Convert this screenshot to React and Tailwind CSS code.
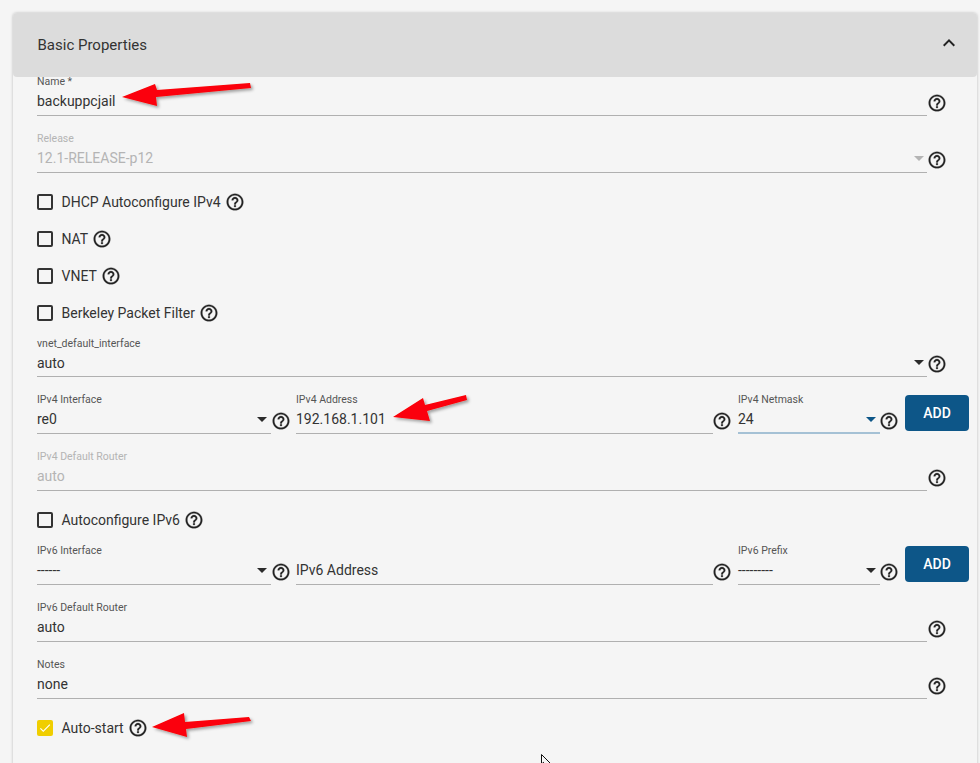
import React from "react";
import { MdExpandLess, MdCheck } from "react-icons/md";

const HelpGlyph = () => (
  <svg width="20" height="20" viewBox="0 0 24 24" fill="currentColor" stroke="currentColor" strokeWidth="0.3">
    <path d="M11 18h2v-2h-2v2zm1-16C6.48 2 2 6.48 2 12s4.48 10 10 10 10-4.48 10-10S17.52 2 12 2zm0 18c-4.41 0-8-3.59-8-8s3.59-8 8-8 8 3.59 8 8-3.59 8-8 8zm0-14c-2.21 0-4 1.79-4 4h2c0-1.1.9-2 2-2s2 .9 2 2c0 2-3 1.75-3 5h2c0-2.25 3-2.5 3-5 0-2.21-1.79-4-4-4z" />
  </svg>
);

const Help = ({ className = "" }) => (
  <div className={"w-[20px] h-[20px] shrink-0 mt-[16px] text-[#222222] " + className}>
    <HelpGlyph />
  </div>
);

const Caret = ({ color = "#2b2b2b", right = "right-[4px]" }) => (
  <svg width="10" height="5" viewBox="0 0 10 5" className={"absolute top-[22px] " + right}>
    <path d="M0 0h10L5 5z" fill={color} />
  </svg>
);

const Field = ({ label, value, disabled, select, focused, tight, className = "", caretRight }) => (
  <div className={"h-[39px] flex flex-col min-w-0 relative " + (tight ? "pt-[1px] " : "") + className}>
    <div className={"h-[10px] leading-[10px] text-[10.5px] whitespace-nowrap " + (disabled ? "text-[#b4b4b4]" : "text-[#555555]")}>{label}</div>
    <div className={"mt-[4px] h-[20px] leading-[20px] text-[14px] whitespace-nowrap " + (disabled ? "text-[#b4b4b4]" : "text-[#333333]")}>{value}</div>
    <div className={focused ? "mt-[3px] h-[2px] bg-[#a5c1d5]" : (tight ? "mt-[3px]" : "mt-[4px]") + " h-[1px] bg-[#b0b0b0]"} />
    {select && <Caret color={focused ? "#0d5688" : disabled ? "#b4b4b4" : "#2b2b2b"} right={caretRight} />}
  </div>
);

const Row = ({ children, className = "" }) => (
  <div className={"flex pr-[22px] " + className}>{children}</div>
);

const Single = (p) => (
  <Row className={p.rowClass || ""}>
    <Field className="flex-1" {...p} />
    <Help />
  </Row>
);

const Check = ({ label, checked, className = "" }) => (
  <div className={"h-[37px] flex items-center " + className}>
    {checked ? (
      <div className="-mt-[1px] w-[16px] h-[16px] rounded-[2px] bg-[#f0ce00] text-white flex items-center justify-center">
        <MdCheck size={14} />
      </div>
    ) : (
      <div className="-mt-[1px] w-[16px] h-[16px] rounded-[2px] border-2 border-[#333333]" />
    )}
    <span className="ml-[8.5px] text-[14px] text-[#333333]">{label}</span>
    <div className="-mt-[1px] ml-[4px] w-[20px] h-[20px] text-[#222222]">
      <HelpGlyph />
    </div>
  </div>
);

const AddButton = () => (
  <button className="ml-[6px] w-[64px] h-[36px] shrink-0 rounded-[4px] bg-[#0d5688] text-white text-[14px] font-medium">
    ADD
  </button>
);

const Triple = ({ className, a, b, c }) => (
  <div className={"flex " + className}>
    <Field className="w-[234px]" select {...a} />
    <Help />
    <Field className="ml-[5px] w-[417px]" {...b} />
    <Help className="-ml-[1px]" />
    <Field className="ml-[6px] w-[142px]" select {...c} />
    <Help className="-ml-[1px]" />
    <AddButton />
  </div>
);

export default function App() {
  return (
    <div className="relative h-[763px] w-[980px] overflow-hidden bg-[#f5f5f5]" style={{ fontFamily: "Roboto, sans-serif" }}>
      <div className="ml-[13px] mr-[3px] pt-[13px]">
        <div className="h-[900px] rounded-[4px] bg-[#f5f5f5] shadow-[0_0_3px_rgba(0,0,0,0.25)]">
          <div className="h-[64px] rounded-[4px] bg-[#dcdcdc] flex items-center justify-between pl-[24.5px] pr-[16px]">
            <span className="text-[15px] text-[#333333]">Basic Properties</span>
            <MdExpandLess size={24} className="text-[#222222] -mt-[5px]" />
          </div>
          <div className="pl-[24px] pr-[8px] flex flex-col">
            <Single label="Name *" value="backuppcjail" />
            <Single rowClass="mt-[18px]" label="Release" value="12.1-RELEASE-p12" disabled select caretRight="right-[3px]" />
            <div className="mt-[11px]">
              <Check label="DHCP Autoconfigure IPv4" />
              <Check label="NAT" />
              <Check label="VNET" />
              <Check label="Berkeley Packet Filter" />
            </div>
            <Single rowClass="mt-[6px]" label="vnet_default_interface" value="auto" select tight caretRight="right-[3px]" />
            <Triple
              className="mt-[18px]"
              a={{ label: "IPv4 Interface", value: "re0" }}
              b={{ label: "IPv4 Address", value: "192.168.1.101" }}
              c={{ label: "IPv4 Netmask", value: "24", focused: true }}
            />
            <Single rowClass="mt-[18px]" label="IPv4 Default Router" value="auto" disabled />
            <Check className="mt-[11px]" label="Autoconfigure IPv6" />
            <Triple
              className="mt-[7px]"
              a={{ label: "IPv6 Interface", value: "------" }}
              b={{ label: "", value: "IPv6 Address" }}
              c={{ label: "IPv6 Prefix", value: "---------" }}
            />
            <Single rowClass="mt-[18px]" label="IPv6 Default Router" value="auto" />
            <Single rowClass="mt-[18px]" label="Notes" value="none" />
            <Check className="mt-[11px]" label="Auto-start" checked />
          </div>
        </div>
      </div>

      <svg width="980" height="763" viewBox="0 0 980 763" className="absolute left-0 top-0 pointer-events-none">
        <defs>
          <filter id="s" x="-20%" y="-40%" width="140%" height="200%">
            <feDropShadow dx="2" dy="2" stdDeviation="1.5" floodColor="#000" floodOpacity="0.35" />
          </filter>
        </defs>
        <g fill="#fb0007" filter="url(#s)">
          <path d="M122 97 155 84 157 90 250 83 251 88 156 97 157 106z" />
          <path d="M393 417 423 398 425 405 466 395 467 400 427 411 430 421z" />
          <path d="M152 727 184 713 185 722 249 717 251 721 186 729 187 737z" />
        </g>
        <path d="M541.5 754.5V764L544 762M541.5 754.5 550 763" fill="#fff" stroke="#111" strokeWidth="1" />
      </svg>
    </div>
  );
}
